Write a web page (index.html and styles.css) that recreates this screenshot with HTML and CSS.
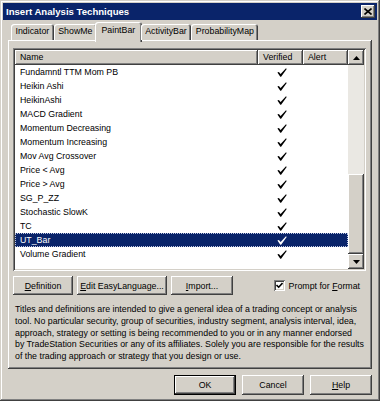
FILE: index.html
```html
<!DOCTYPE html>
<html lang="en">
<head>
    <meta charset="UTF-8">
    <meta name="viewport" content="width=device-width, initial-scale=1.0">
    <title>Insert Analysis Techniques</title>
    <link rel="stylesheet" href="styles.css">
</head>
<body>
    <svg width="0" height="0" class="defs">
        <symbol id="tick" viewBox="0 0 10 9">
            <path d="M0.4 4.6 L1.9 3.9 L3.6 6.1 L9 0.3 L9.7 0.9 L4.1 8.7 L3.3 8.7 Z"/>
        </symbol>
    </svg>

    <div class="window">
        <div class="titlebar">
            <span class="title">Insert Analysis Techniques</span>
            <span class="close-btn">
                <svg width="8" height="7" viewBox="0 0 8 7">
                    <path d="M0.5 0.5 L7.5 6.5 M7.5 0.5 L0.5 6.5" stroke="#000" stroke-width="1.6"/>
                </svg>
            </span>
        </div>

        <div class="content">
            <div class="tabs">
                <div class="tab">Indicator</div>
                <div class="tab">ShowMe</div>
                <div class="tab selected">PaintBar</div>
                <div class="tab">ActivityBar</div>
                <div class="tab">ProbabilityMap</div>
            </div>

            <div class="panel">
                <div class="listbox">
                    <div class="list-main">
                        <div class="list-header">
                            <div class="hcell col-name">Name</div>
                            <div class="hcell col-verified">Verified</div>
                            <div class="hcell col-alert">Alert</div>
                        </div>
                        <div class="list-rows">
                            <div class="row"><span class="col-name">Fundamntl TTM Mom PB</span><span class="col-verified"><svg class="tick"><use href="#tick"/></svg></span><span class="col-alert"></span></div>
                            <div class="row"><span class="col-name">Heikin Ashi</span><span class="col-verified"><svg class="tick"><use href="#tick"/></svg></span><span class="col-alert"></span></div>
                            <div class="row"><span class="col-name">HeikinAshi</span><span class="col-verified"><svg class="tick"><use href="#tick"/></svg></span><span class="col-alert"></span></div>
                            <div class="row"><span class="col-name">MACD Gradient</span><span class="col-verified"><svg class="tick"><use href="#tick"/></svg></span><span class="col-alert"></span></div>
                            <div class="row"><span class="col-name">Momentum Decreasing</span><span class="col-verified"><svg class="tick"><use href="#tick"/></svg></span><span class="col-alert"></span></div>
                            <div class="row"><span class="col-name">Momentum Increasing</span><span class="col-verified"><svg class="tick"><use href="#tick"/></svg></span><span class="col-alert"></span></div>
                            <div class="row"><span class="col-name">Mov Avg Crossover</span><span class="col-verified"><svg class="tick"><use href="#tick"/></svg></span><span class="col-alert"></span></div>
                            <div class="row"><span class="col-name">Price &lt; Avg</span><span class="col-verified"><svg class="tick"><use href="#tick"/></svg></span><span class="col-alert"></span></div>
                            <div class="row"><span class="col-name">Price &gt; Avg</span><span class="col-verified"><svg class="tick"><use href="#tick"/></svg></span><span class="col-alert"></span></div>
                            <div class="row"><span class="col-name">SG_P_ZZ</span><span class="col-verified"><svg class="tick"><use href="#tick"/></svg></span><span class="col-alert"></span></div>
                            <div class="row"><span class="col-name">Stochastic SlowK</span><span class="col-verified"><svg class="tick"><use href="#tick"/></svg></span><span class="col-alert"></span></div>
                            <div class="row"><span class="col-name">TC</span><span class="col-verified"><svg class="tick"><use href="#tick"/></svg></span><span class="col-alert"></span></div>
                            <div class="row selected"><span class="col-name">UT_Bar</span><span class="col-verified"><svg class="tick"><use href="#tick"/></svg></span><span class="col-alert"></span></div>
                            <div class="row"><span class="col-name">Volume Gradient</span><span class="col-verified"><svg class="tick"><use href="#tick"/></svg></span><span class="col-alert"></span></div>
                        </div>
                    </div>
                    <div class="scrollbar">
                        <div class="scroll-btn">
                            <svg width="7" height="4" viewBox="0 0 7 4"><path d="M3.5 0 L7 4 L0 4 Z"/></svg>
                        </div>
                        <div class="scroll-track"></div>
                        <div class="scroll-thumb"></div>
                        <div class="scroll-btn">
                            <svg width="7" height="4" viewBox="0 0 7 4"><path d="M0 0 L7 0 L3.5 4 Z"/></svg>
                        </div>
                    </div>
                </div>

                <div class="actions">
                    <button class="btn btn-definition"><u>D</u>efinition</button>
                    <button class="btn btn-edit"><u>E</u>dit EasyLanguage...</button>
                    <button class="btn btn-import"><u>I</u>mport...</button>
                    <label class="prompt">
                        <span class="checkbox">
                            <svg width="7" height="7" viewBox="0 0 7 7"><path d="M0.5 3 L2.7 5.2 L6.5 1" fill="none" stroke="#000" stroke-width="1.6"/></svg>
                        </span>
                        <span class="prompt-text">Prompt for <u>F</u>ormat</span>
                    </label>
                </div>

                <p class="disclaimer">
                    Titles and definitions are intended to give a general idea of a trading concept or analysis<br>
                    tool. No particular security, group of securities, industry segment, analysis interval, idea,<br>
                    approach, strategy or setting is being recommended to you or in any manner endorsed<br>
                    by TradeStation Securities or any of its affiliates. Solely you are responsible for the results<br>
                    of the trading approach or strategy that you design or use.
                </p>
            </div>

            <div class="dialog-buttons">
                <button class="btn btn-default">OK</button>
                <button class="btn btn-cancel">Cancel</button>
                <button class="btn btn-help"><u>H</u>elp</button>
            </div>
        </div>
    </div>
</body>
</html>
```

FILE: styles.css
```css
* {
    margin: 0;
    padding: 0;
    box-sizing: border-box;
}

body {
    font-family: "Liberation Sans", Arial, sans-serif;
    font-size: 8.8px;
    color: #000;
    background-color: #d4d0c8;
    width: 380px;
    height: 401px;
    overflow: hidden;
}

.defs {
    position: absolute;
}

.window {
    width: 380px;
    height: 401px;
    padding: 3px;
    display: flex;
    flex-direction: column;
    background: #d4d0c8;
    box-shadow: inset -1px -1px #404040, inset 1px 1px #d4d0c8,
                inset -2px -2px #808080, inset 2px 2px #fff;
}

/* Title bar */
.titlebar {
    height: 17px;
    background: #0a246a;
    display: flex;
    align-items: center;
    justify-content: space-between;
    padding: 0 2px 0 3px;
}

.title {
    color: #fff;
    font-weight: bold;
    font-size: 9.6px;
}

.close-btn {
    width: 14px;
    height: 13px;
    display: flex;
    align-items: center;
    justify-content: center;
    background: #d4d0c8;
    box-shadow: inset -1px -1px #404040, inset 1px 1px #fff, inset -2px -2px #808080;
}

.content {
    flex: 1;
    padding: 0 5px;
    display: flex;
    flex-direction: column;
}

/* Tabs */
.tabs {
    height: 20px;
    display: flex;
    align-items: flex-end;
    padding-left: 3px;
    position: relative;
    z-index: 1;
}

.tab {
    height: 16px;
    line-height: 15px;
    padding: 0 4.5px;
    background: #d4d0c8;
    border-radius: 3px 3px 0 0;
    box-shadow: inset 1px 1px #fff, inset -1px 0 #404040, inset -2px 0 #808080;
}

.tab.selected {
    height: 20px;
    line-height: 17px;
    margin: 0 -1px -2px -2px;
    padding: 0 6.5px;
}

/* Panel */
.panel {
    height: 329px;
    padding: 8px 6px 0 5px;
    box-shadow: inset -1px -1px #404040, inset 1px 1px #fff, inset -2px -2px #808080;
}

.listbox {
    height: 223px;
    padding: 2px;
    display: flex;
    background: #fff;
    box-shadow: inset 1px 1px #808080, inset -1px -1px #fff,
                inset 2px 2px #404040, inset -2px -2px #d4d0c8;
}

.list-main {
    flex: 1;
    display: flex;
    flex-direction: column;
}

.list-header {
    height: 15px;
    display: flex;
}

.hcell {
    line-height: 15px;
    padding-left: 5px;
    background: #d4d0c8;
    box-shadow: inset -1px -1px #404040, inset 1px 1px #fff, inset -2px -2px #808080;
}

.col-name {
    width: 243px;
    padding-left: 5px;
}

.col-verified {
    width: 45px;
}

.col-alert {
    width: 45px;
}

.row {
    height: 14px;
    line-height: 14px;
    display: flex;
}

.row .col-verified {
    display: flex;
    align-items: center;
    justify-content: center;
    padding-left: 3px;
}

.tick {
    width: 10px;
    height: 9px;
    fill: #000;
}

.row.selected {
    background: #0a246a;
    color: #fff;
    outline: 1px dotted #c0c8e0;
    outline-offset: -1px;
}

.row.selected .tick {
    fill: #fff;
}

/* Scrollbar */
.scrollbar {
    width: 16px;
    display: flex;
    flex-direction: column;
    background: #eae8e3;
}

.scroll-btn {
    height: 15px;
    display: flex;
    align-items: center;
    justify-content: center;
    background: #d4d0c8;
    box-shadow: inset -1px -1px #404040, inset 1px 1px #fff, inset -2px -2px #808080;
}

.scroll-track {
    height: 109px;
}

.scroll-thumb {
    height: 80px;
    background: #d4d0c8;
    box-shadow: inset -1px -1px #404040, inset 1px 1px #fff, inset -2px -2px #808080;
}

/* Buttons */
.btn {
    font-family: inherit;
    font-size: 8.8px;
    color: #000;
    background: #d4d0c8;
    border: none;
    box-shadow: inset -1px -1px #404040, inset 1px 1px #fff, inset -2px -2px #808080;
}

.actions {
    margin-top: 5px;
    height: 19px;
    display: flex;
    align-items: center;
    gap: 4px;
}

.actions .btn {
    height: 19px;
}

.btn-definition {
    width: 60px;
}

.btn-edit {
    width: 90px;
}

.btn-import {
    width: 62px;
}

.prompt {
    margin-left: auto;
    margin-right: 6px;
    display: flex;
    align-items: center;
    gap: 4px;
}

.checkbox {
    width: 11px;
    height: 11px;
    display: flex;
    align-items: center;
    justify-content: center;
    background: #fff;
    box-shadow: inset 1px 1px #808080, inset -1px -1px #fff,
                inset 2px 2px #404040, inset -2px -2px #d4d0c8;
}

.disclaimer {
    margin-top: 9px;
    padding-left: 2px;
    line-height: 11.8px;
    white-space: nowrap;
}

.dialog-buttons {
    margin-top: 6px;
    height: 20px;
    display: flex;
    justify-content: flex-end;
    gap: 6px;
}

.dialog-buttons .btn {
    height: 20px;
    width: 62px;
}

.btn-cancel {
    width: 61px;
}

.btn-default {
    border: 1px solid #000;
}
```
